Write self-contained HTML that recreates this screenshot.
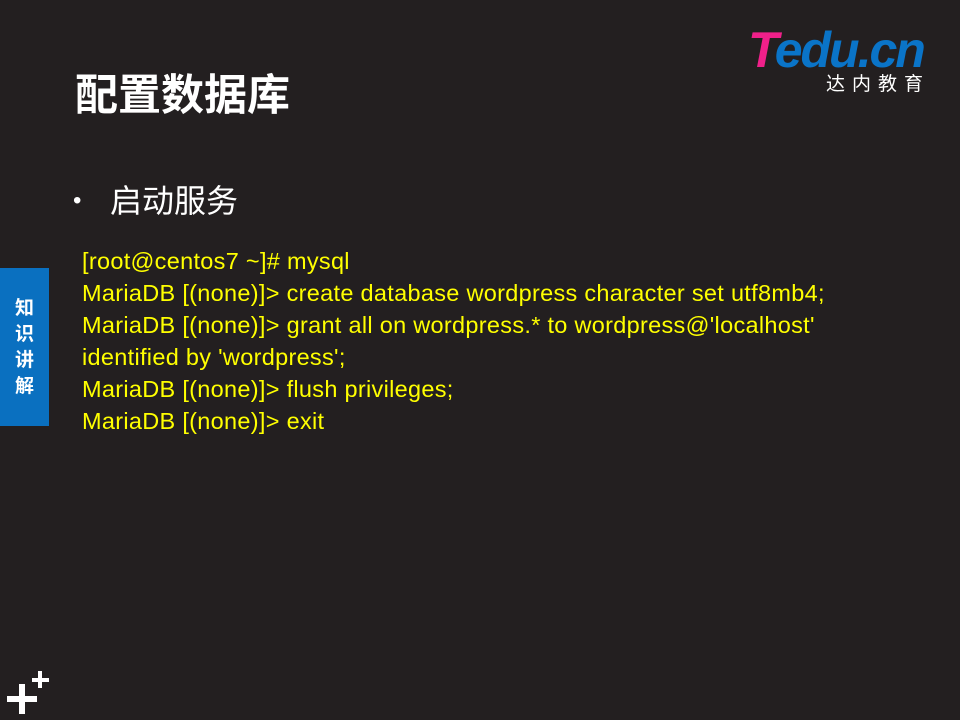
<!DOCTYPE html>
<html><head><meta charset="utf-8"><style>
body{margin:0;width:960px;height:720px;background:#231f20;position:relative;overflow:hidden;font-family:"Liberation Sans","Noto Sans CJK SC",sans-serif;}
.t{position:absolute;left:75px;top:70px;color:#fff;font-size:43px;font-weight:bold;line-height:52px;}
.bd{position:absolute;left:73px;top:180px;color:#fff;font-size:24px;line-height:42px;}
.b{position:absolute;left:110px;top:180px;color:#fff;font-size:32px;line-height:42px;}
.code{position:absolute;left:82px;top:245px;color:#ffff00;font-size:23.5px;letter-spacing:0.3px;line-height:32px;}
.tab{position:absolute;left:0;top:268px;width:49px;height:158px;background:#0a70c0;color:#fff;font-size:19px;font-weight:bold;line-height:26px;text-align:center;padding-top:28px;box-sizing:border-box;}
.logo{position:absolute;left:748px;top:22px;font-size:50px;font-weight:bold;font-style:italic;letter-spacing:-2px;line-height:56px;}
.cn{position:absolute;left:826px;top:73px;color:#fff;font-size:19px;letter-spacing:7px;line-height:24px;}
.p{position:absolute;background:#fff;}
</style></head><body>
<div class="logo"><span style="color:#f0208a">T</span><span style="color:#0a74c8">edu.cn</span></div>
<div class="cn">达内教育</div>
<div class="t">配置数据库</div>
<div class="bd">•</div>
<div class="b">启动服务</div>
<div class="code">[root@centos7 ~]# mysql<br>MariaDB [(none)]&gt; create database wordpress character set utf8mb4;<br>MariaDB [(none)]&gt; grant all on wordpress.* to wordpress@'localhost'<br>identified by 'wordpress';<br>MariaDB [(none)]&gt; flush privileges;<br>MariaDB [(none)]&gt; exit</div>
<div class="tab">知<br>识<br>讲<br>解</div>
<div class="p" style="left:7px;top:696px;width:30px;height:6px"></div>
<div class="p" style="left:19px;top:684px;width:6px;height:30px"></div>
<div class="p" style="left:32px;top:678px;width:17px;height:4px"></div>
<div class="p" style="left:38px;top:671px;width:4px;height:17px"></div>
</body></html>
